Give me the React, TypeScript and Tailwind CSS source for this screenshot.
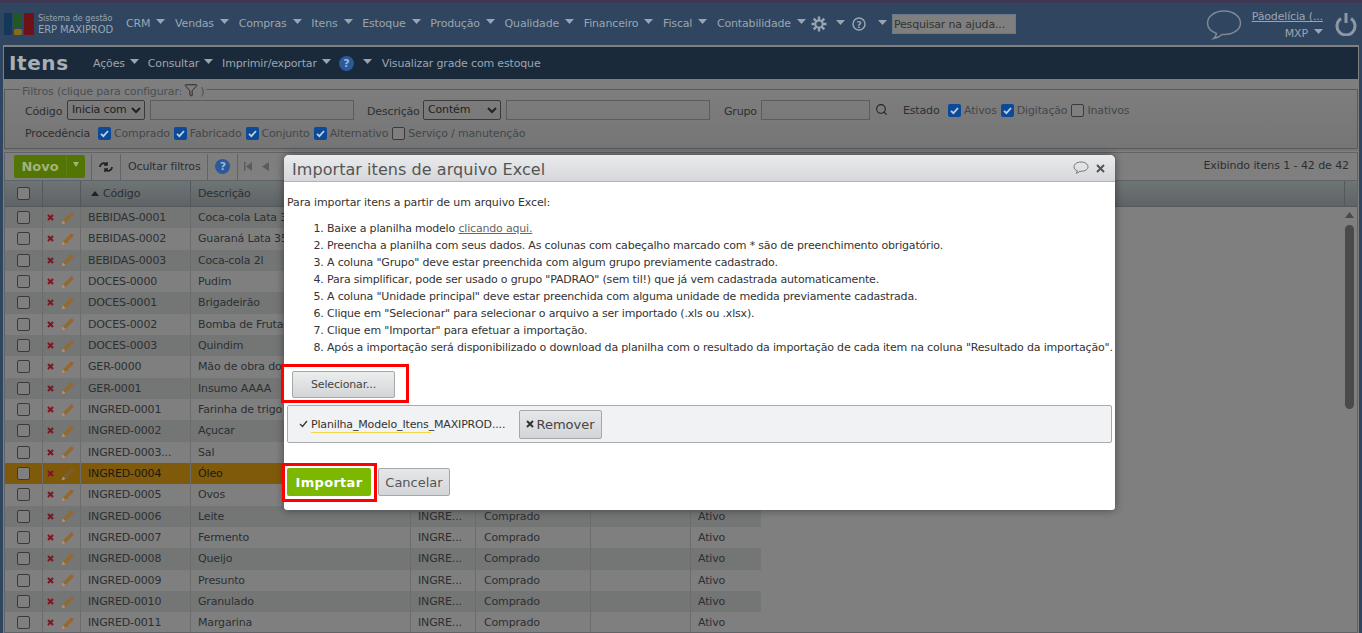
import React from "react";
import { Search, Funnel } from "lucide-react";

const Caret = ({ c = "#9aa5b1", w = 9 }: { c?: string; w?: number }) => (
  <svg width={w} height="5" viewBox="0 0 9 5" preserveAspectRatio="none" className="shrink-0 mb-[4px]"><path d="M0 0h9L4.5 5z" fill={c} /></svg>
);

const Box = ({ on = false }: { on?: boolean }) =>
  on ? (
    <span className="inline-flex w-[13px] h-[13px] shrink-0 rounded-[2px] bg-[#0a4a99] items-center justify-center">
      <svg width="11" height="11" viewBox="0 0 11 11"><path d="M2 5.8 4.4 8.2 9 3" fill="none" stroke="#c3cedd" strokeWidth="1.8" /></svg>
    </span>
  ) : (
    <span className="inline-block w-[13px] h-[13px] shrink-0 rounded-[2px] border border-[#3a3a3a] bg-[#7f7f7f]" />
  );

const Check = ({ label, on = false }: { label: string; on?: boolean }) => (
  <span className="inline-flex items-center gap-[3px] text-[#43484b]">
    <Box on={on} />
    {label}
  </span>
);

const Nav = ({ t }: { t: string }) => (
  <span className="flex items-center gap-[6px] whitespace-nowrap">
    {t}
    <Caret />
  </span>
);

const Gear = () => (
  <svg width="16" height="16" viewBox="0 0 16 16" className="shrink-0">
    <g stroke="#9aa5b1" strokeWidth="2.4">
      <path d="M8 0.5v15M0.5 8h15M2.7 2.7l10.6 10.6M13.3 2.7 2.7 13.3" />
    </g>
    <circle cx="8" cy="8" r="4.6" fill="#9aa5b1" />
    <circle cx="8" cy="8" r="2.6" fill="#2f4560" />
  </svg>
);

const Help = ({ size = 15 }: { size?: number }) => (
  <span
    className="inline-flex shrink-0 items-center justify-center rounded-full bg-[#2a5a9c] text-[#9fb5d2] font-bold text-[11px] leading-none"
    style={{ width: size, height: size }}
  >
    ?
  </span>
);

const Pencil = ({ dim = false }: { dim?: boolean }) => (
  <svg width="14" height="14" viewBox="0 0 14 14" className="shrink-0">
    <path d="M0.500 13.500 2 9.500 10.400 1 13 3.600 4.500 12z" fill={dim ? "#76603a" : "#96682e"} />
    <path d="M0.500 13.500 2 9.500 4.500 12z" fill="#a8977c" />
  </svg>
);

const RedX = () => (
  <svg width="7" height="7" viewBox="0 0 7 7" className="shrink-0"><path d="M1 1l5 5M6 1 1 6" stroke="#7f1420" strokeWidth="2" /></svg>
);

const rows: [string, string, boolean?][] = [
  ["BEBIDAS-0001", "Coca-cola Lata 350ml"],
  ["BEBIDAS-0002", "Guaraná Lata 350ml"],
  ["BEBIDAS-0003", "Coca-cola 2l"],
  ["DOCES-0000", "Pudim"],
  ["DOCES-0001", "Brigadeirão"],
  ["DOCES-0002", "Bomba de Frutas"],
  ["DOCES-0003", "Quindim"],
  ["GER-0000", "Mão de obra do padeiro"],
  ["GER-0001", "Insumo AAAA"],
  ["INGRED-0001", "Farinha de trigo"],
  ["INGRED-0002", "Açucar"],
  ["INGRED-0003...", "Sal"],
  ["INGRED-0004", "Óleo", true],
  ["INGRED-0005", "Ovos"],
  ["INGRED-0006", "Leite"],
  ["INGRED-0007", "Fermento"],
  ["INGRED-0008", "Queijo"],
  ["INGRED-0009", "Presunto"],
  ["INGRED-0010", "Granulado"],
  ["INGRED-0011", "Margarina"],
];

const steps: React.ReactNode[] = [
  <>Baixe a planilha modelo <span className="underline text-[#666]">clicando aqui.</span></>,
  <>Preencha a planilha com seus dados. As colunas com cabeçalho marcado com * são de preenchimento obrigatório.</>,
  <>A coluna "Grupo" deve estar preenchida com algum grupo previamente cadastrado.</>,
  <>Para simplificar, pode ser usado o grupo "PADRAO" (sem til!) que já vem cadastrada automaticamente.</>,
  <>A coluna "Unidade principal" deve estar preenchida com alguma unidade de medida previamente cadastrada.</>,
  <>Clique em "Selecionar" para selecionar o arquivo a ser importado (.xls ou .xlsx).</>,
  <>Clique em "Importar" para efetuar a importação.</>,
  <>Após a importação será disponibilizado o download da planilha com o resultado da importação de cada item na coluna "Resultado da importação".</>,
];

const Sep = () => <span className="w-px h-[26px] bg-[#5e6468] shrink-0" />;

export default function App() {
  return (
    <div className="relative w-[1362px] h-[633px] overflow-hidden bg-[#2f4560] text-[11px] leading-[13px] tracking-[-0.16px] font-['DejaVu_Sans','Liberation_Sans',sans-serif] text-[#2c2f31]">
      <div className="h-[3px] bg-[#3f3854]" />

      {/* Top bar */}
      <header className="h-[42px] flex items-center text-[#9aa5b1]">
        <svg width="30" height="22" viewBox="0 0 30 22" className="ml-[4px] shrink-0">
          <rect x="0" y="0" width="8" height="22" rx="1" fill="#14385c" />
          <rect x="10" y="0" width="8" height="15" rx="1" fill="#1f5a24" />
          <rect x="10" y="16" width="8" height="6" rx="1" fill="#8a6a14" />
          <rect x="20" y="0" width="10" height="22" rx="1" fill="#6f1218" />
        </svg>
        <div className="ml-[4px] w-[88px] shrink-0 text-[8px] leading-[11px] tracking-normal">
          <div>Sistema de gestão</div>
          <div className="text-[10px] leading-[12px] tracking-[-0.1px]">ERP MAXIPROD</div>
        </div>
        <nav className="flex items-center gap-[9.7px] mb-[2px]">
          {["CRM", "Vendas", "Compras", "Itens", "Estoque", "Produção", "Qualidade", "Financeiro", "Fiscal", "Contabilidade"].map((t) => (
            <Nav key={t} t={t} />
          ))}
        </nav>
        <span className="ml-[5px] flex items-center gap-[9px]">
          <Gear />
          <Caret />
        </span>
        <svg width="14" height="14" viewBox="0 0 14 14" className="ml-[7px] shrink-0">
          <circle cx="7" cy="7" r="6" fill="none" stroke="#9aa5b1" strokeWidth="1.5" />
          <text x="7" y="10.5" textAnchor="middle" fontSize="9" fontWeight="700" fill="#9aa5b1">?</text>
        </svg>
        <span className="ml-[12px]"><Caret /></span>
        <div className="ml-[5px] w-[124px] h-[20px] bg-[#7f7f7f] border border-[#6d7986] text-[#333] pl-[1px] flex items-center whitespace-nowrap">
          Pesquisar na ajuda...
        </div>
        <svg width="36" height="32" viewBox="0 0 36 32" className="ml-[190px] shrink-0 mt-[1px]">
          <path d="M18 2C8.5 2 1.5 7.5 1.5 14c0 5 4 8.6 9 10.5-.4 2-1.5 3.800-3 5 3.500-.5 6.500-2 8.500-4 .8.100 1.600.100 2 .100 9.500 0 16.500-5.200 16.500-11.600S27.500 2 18 2z" fill="none" stroke="#7d8994" strokeWidth="1.500" />
        </svg>
        <div className="ml-[8px] w-[73px] shrink-0 text-right mt-[2px]">
          <div className="underline whitespace-nowrap">Pãodelícia (...</div>
          <div className="mt-[4px] flex justify-end items-center gap-[6px]">MXP <Caret /></div>
        </div>
        <svg width="22" height="24" viewBox="0 0 22 24" className="ml-[12px] shrink-0">
          <path d="M6 6.500a9 9 0 1 0 10 0M11 1v10" fill="none" stroke="#8d98a3" strokeWidth="3" />
        </svg>
      </header>

      {/* Main panel */}
      <div className="mx-[3px] h-[588px] border-t-2 border-[#7f7f7f] border-x flex flex-col overflow-hidden bg-[#7f7f7f]">
        {/* Title bar */}
        <div className="h-[32px] shrink-0 bg-[#1a2a3b] flex items-center text-[#9aa5b1]">
          <span className="ml-[5px] font-bold text-[20px] leading-[24px] tracking-[0.6px] text-[#a7b0b5] w-[84px]">Itens</span>
          <span className="flex items-center gap-[5px] mt-[1px]">Ações <Caret /></span>
          <span className="ml-[9px] flex items-center gap-[5px] mt-[1px]">Consultar <Caret /></span>
          <span className="ml-[9px] flex items-center gap-[5px] mt-[1px]">Imprimir/exportar <Caret /></span>
          <span className="ml-[8px] mt-[1px]"><Help /></span>
          <span className="ml-[9px]"><Caret /></span>
          <span className="ml-[10px] mt-[1px]">Visualizar grade com estoque</span>
        </div>

        {/* Filters */}
        <div className="h-[72px] shrink-0 bg-gradient-to-b from-[#7f7f7f] to-[#757575]">
          <fieldset className="mt-[2px] h-[68px] border border-[#5a5a5a] pl-[21px] min-w-0">
            <legend className="-ml-[6px] px-[2px] text-[#4a4f52] flex items-end h-[17px]">
              Filtros (clique para configurar: <Funnel size={14} strokeWidth={1.6} className="mx-[2px] mb-[1px] text-[#222]" />)
            </legend>
            <div className="flex items-center h-[21px] mt-[1px] -ml-[1px] whitespace-nowrap">
              <span className="w-[42px] mt-[3px]">Código</span>
              <select defaultValue="Inicia com" className="w-[78px] h-[20px] border border-[#3a3a3a] rounded-[2px] bg-transparent text-[11px] text-[#222]">
                <option>Inicia com</option>
              </select>
              <span className="ml-[5px] w-[204px] h-[20px] border border-[#5c5c5c]" />
              <span className="ml-[13px] w-[56px] mt-[3px]">Descrição</span>
              <select defaultValue="Contém" className="w-[78px] h-[20px] border border-[#3a3a3a] rounded-[2px] bg-transparent text-[11px] text-[#222]">
                <option>Contém</option>
              </select>
              <span className="ml-[5px] w-[204px] h-[20px] border border-[#5c5c5c]" />
              <span className="ml-[14px] w-[37px] mt-[3px]">Grupo</span>
              <span className="w-[109px] h-[20px] border border-[#5c5c5c]" />
              <Search size={13} strokeWidth={2} className="ml-[5px] text-[#222]" />
              <span className="ml-[15px] w-[45px] mt-[2px]">Estado</span>
              <span className="flex gap-[4px] mt-[2px]">
                <Check label="Ativos" on />
                <Check label="Digitação" on />
                <Check label="Inativos" />
              </span>
            </div>
            <div className="flex items-center h-[16px] mt-[5px] -ml-[1px] whitespace-nowrap">
              <span className="w-[73px]">Procedência</span>
              <span className="flex gap-[4px]">
                <Check label="Comprado" on />
                <Check label="Fabricado" on />
                <Check label="Conjunto" on />
                <Check label="Alternativo" on />
                <Check label="Serviço / manutenção" />
              </span>
            </div>
          </fieldset>
        </div>

        {/* Grid */}
        <div className="mt-[1px] flex-1 border border-[#5e6468] flex flex-col min-h-0 overflow-hidden relative">
          <div className="h-[28px] shrink-0 flex items-center border-b border-[#5e6468] relative">
            <div className="ml-[9px] w-[71px] h-[23px] rounded-[2px] bg-[#537503] flex items-center font-bold text-[13px] tracking-normal text-[#a3b37c]">
              <span className="w-[52px] text-center">Novo</span>
              <span className="w-px h-full bg-[#5f7d1e]" />
              <span className="flex-1 flex justify-center"><Caret c="#a3b37c" w={6} /></span>
            </div>
            <span className="ml-[6px] flex"><Sep /></span>
            <svg width="14" height="12" viewBox="0 0 14 12" className="mx-[7px] shrink-0"><path d="M1 6a4 4 0 0 1 7-2.500M8 1v3H5M13 6a4 4 0 0 1-7 2.500M6 11V8h3" fill="none" stroke="#222" strokeWidth="1.600" /></svg>
            <Sep />
            <span className="px-[7px] whitespace-nowrap">Ocultar filtros</span>
            <Sep />
            <span className="mx-[7px] flex"><Help /></span>
            <Sep />
            <svg width="9" height="9" viewBox="0 0 9 9" className="ml-[5px] shrink-0"><path d="M1 0h1.500v9H1zM9 0v9L3 4.500z" fill="#5c5c5c" /></svg>
            <svg width="7" height="9" viewBox="0 0 7 9" className="ml-[10px] shrink-0"><path d="M7 0v9L0 4.500z" fill="#5c5c5c" /></svg>
            <span className="absolute right-[8px] top-[6px] tracking-[-0.08px]">Exibindo itens 1 - 42 de 42</span>
          </div>

          <div className="h-[26px] shrink-0 flex items-center bg-gradient-to-b from-[#6f7477] to-[#5f6366] border-b border-[#53585c]">
            <div className="w-[38px] h-full flex items-center justify-center border-r border-[#53585c]"><Box /></div>
            <div className="w-[38px] h-full border-r border-[#53585c]" />
            <div className="w-[110px] h-full flex items-center border-r border-[#53585c] pl-[10px] gap-[4px]">
              <svg width="8" height="5" viewBox="0 0 8 5"><path d="M4 0l4 5H0z" fill="#222" /></svg>Código
            </div>
            <div className="w-[220px] h-full flex items-center pl-[7px]">Descrição</div>
            <div className="flex-1" />
            <div className="w-[13px] h-full border-l border-[#53585c]" />
          </div>

          <div className="flex-1 relative overflow-hidden">
            {rows.map(([c, d, sel], i) => (
              <div
                key={c}
                className={
                  "w-[756px] h-[21.33px] flex items-center " +
                  (sel ? "bg-[#7f5a0a] text-[#1c1a10]" : i % 2 === 0 ? "bg-[#747675]" : "bg-[#7f7f7f]")
                }
              >
                <div className="w-[38px] h-full flex items-center justify-center border-r border-[#6c6c6c]"><Box /></div>
                <div className="w-[38px] h-full flex items-center pl-[4px] gap-[7px] border-r border-[#6c6c6c]">
                  <RedX />
                  <Pencil dim={sel} />
                </div>
                <div className="w-[110px] h-full flex items-center pl-[7px] border-r border-[#6c6c6c] whitespace-nowrap">{c}</div>
                <div className="w-[220px] h-full flex items-center pl-[7px] border-r border-[#6c6c6c] whitespace-nowrap overflow-hidden">{d}</div>
                <div className="w-[65px] h-full flex items-center pl-[7px] border-r border-[#6c6c6c]">{sel ? "" : "INGRE..."}</div>
                <div className="w-[115px] h-full flex items-center pl-[8px] border-r border-[#6c6c6c]">Comprado</div>
                <div className="w-[100px] h-full border-r border-[#6c6c6c]" />
                <div className="flex-1 h-full flex items-center pl-[7px]">Ativo</div>
              </div>
            ))}
            <div className="absolute right-[3px] top-[5px] w-[9px] flex flex-col items-center gap-[7px]">
              <svg width="9" height="6" viewBox="0 0 9 6"><path d="M4.500 0 9 6H0z" fill="#4a4a4a" /></svg>
              <div className="w-[9px] h-[184px] rounded-full bg-[#4a4a4a]" />
            </div>
          </div>
        </div>
      </div>

      {/* Modal */}
      <div className="absolute left-[284px] top-[155px] w-[831px] h-[355px] rounded-t-[5px] rounded-b-[3px] bg-white shadow-[0_0_8px_rgba(0,0,0,0.45)] text-[#333]">
        <div className="h-[27px] rounded-t-[5px] bg-gradient-to-b from-[#eaebed] to-[#d5d7da] border-b border-[#b0b2b5] flex items-center pl-[8px] pr-[10px]">
          <span className="text-[16px] tracking-[0.06px] text-[#555] mt-[2px]">Importar itens de arquivo Excel</span>
          <svg width="16" height="14" viewBox="0 0 16 14" className="ml-auto shrink-0">
            <path d="M8 1C4 1 1 3 1 5.800c0 2 1.500 3.400 3.400 4-.2 1-.7 1.800-1.400 2.400 1.600-.2 3-.9 3.900-1.900H8c4 0 7-1.900 7-4.500S12 1 8 1z" fill="none" stroke="#777" strokeWidth="1" />
          </svg>
          <svg width="9" height="9" viewBox="0 0 9 9" className="ml-[7px] shrink-0"><path d="M1 1l7 7M8 1 1 8" stroke="#555" strokeWidth="2" /></svg>
        </div>

        <div className="px-[3px]">
          <p className="mt-[14px] tracking-[-0.12px]">Para importar itens a partir de um arquivo Excel:</p>
          <ol className="mt-[13px] ml-[24px] list-decimal list-outside pl-[16px] space-y-[4px] whitespace-nowrap tracking-[-0.175px]">
            {steps.map((s, i) => (
              <li key={i}>{s}</li>
            ))}
          </ol>

          <div className="relative mt-[17px] ml-[5px] w-[103px] h-[27px]">
            <button className="w-full h-full rounded-[2px] border border-[#a5a8ab] bg-gradient-to-b from-[#eceded] to-[#d3d5d8] text-[#444]">Selecionar...</button>
            <span className="absolute -left-[11px] -top-[7px] w-[128px] h-[39px] border-[3px] border-[#ff0000]" />
          </div>

          <div className="mt-[7px] h-[38px] w-[825px] rounded-[2px] border border-[#a8aaad] bg-[#f1f2f4] flex items-center pl-[11px]">
            <svg width="9" height="8" viewBox="0 0 9 8" className="shrink-0"><path d="M1 4l2.500 2.500L8 1" fill="none" stroke="#333" strokeWidth="1.200" /></svg>
            <span className="relative ml-[3px] w-[208px] whitespace-nowrap mt-[1px]">
              Planilha_Modelo_Itens_MAXIPROD....
              <span className="absolute left-0 top-[14px] w-[120px] h-px bg-[#f5d64a]" />
            </span>
            <button className="w-[83px] h-[29px] rounded-[2px] border border-[#a5a8ab] bg-gradient-to-b from-[#e6e7e9] to-[#d3d5d8] flex items-center justify-center text-[13px] tracking-normal text-[#444] gap-[2px]">
              <svg width="8" height="8" viewBox="0 0 8 8"><path d="M1 1l6 6M7 1 1 7" stroke="#333" strokeWidth="2" /></svg>
              Remover
            </button>
          </div>

          <div className="mt-[25px] flex items-center gap-[7px]">
            <div className="relative w-[84px] h-[28px]">
              <button className="w-full h-full rounded-[2px] bg-[#7cb800] text-white font-bold text-[13px] tracking-[0.3px]">Importar</button>
              <span className="absolute -left-[5px] -top-[5px] w-[95px] h-[39px] border-[3px] border-[#ff0000]" />
            </div>
            <button className="w-[72px] h-[28px] rounded-[2px] border border-[#a5a8ab] bg-gradient-to-b from-[#e6e7e9] to-[#d3d5d8] text-[13px] tracking-normal text-[#555]">Cancelar</button>
          </div>
        </div>
      </div>
    </div>
  );
}
